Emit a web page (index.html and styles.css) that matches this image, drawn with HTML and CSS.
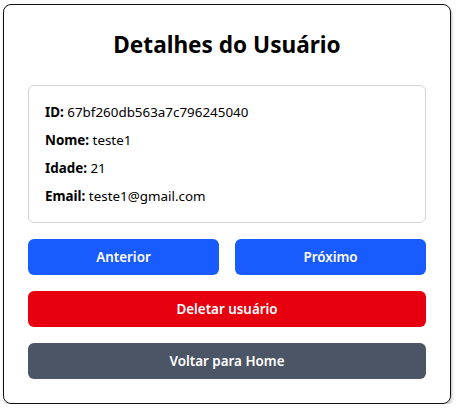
FILE: index.html
```html
<!DOCTYPE html>
<html lang="pt">
<head>
<meta charset="utf-8">
<link rel="stylesheet" href="styles.css">
</head>
<body>
<div class="card">
  <h1 class="title">Detalhes do Usuário</h1>
  <div class="info">
    <p><b>ID:</b> 67bf260db563a7c796245040</p>
    <p><b>Nome:</b> teste1</p>
    <p><b>Idade:</b> 21</p>
    <p><b>Email:</b> teste1@gmail.com</p>
  </div>
  <div class="nav">
    <button class="btn blue">Anterior</button>
    <button class="btn blue">Próximo</button>
  </div>
  <button class="btn red">Deletar usuário</button>
  <button class="btn gray">Voltar para Home</button>
</div>
</body>
</html>
```
FILE: styles.css
```css
html, body { margin: 0; padding: 0; background: #fff; }
body {
  padding: 4px 0 0 3px;
  font-family: "Noto Sans", "Open Sans", sans-serif;
  color: #000;
}
.card {
  width: 448px;
  box-sizing: border-box;
  border: 1px solid #111;
  border-radius: 8px;
  padding: 24px;
  display: flex;
  flex-direction: column;
  gap: 16px;
  box-shadow: 1px 2px 3px rgba(0,0,0,0.25);
}
.title {
  margin: 0 0 8px 0;
  font-size: 22.6px;
  line-height: 32px;
  font-weight: 700;
  text-align: center;
}
.info {
  border: 1px solid #d1d5db;
  border-radius: 6px;
  padding: 16px;
  display: flex;
  flex-direction: column;
  gap: 8px;
}
.info p {
  margin: 0;
  font-size: 13.4px;
  line-height: 20px;
}
.info b { font-weight: 700; }
.nav {
  display: flex;
  gap: 16px;
}
.nav .btn { flex: 1; }
.btn {
  border: none;
  border-radius: 6px;
  height: 36px;
  padding: 0;
  font-family: inherit;
  font-size: 13.4px;
  font-weight: 600;
  color: #fff;
  width: 100%;
}
.blue { background: #185cff; }
.red { background: #e6000f; }
.gray { background: #4b5565; }
```
